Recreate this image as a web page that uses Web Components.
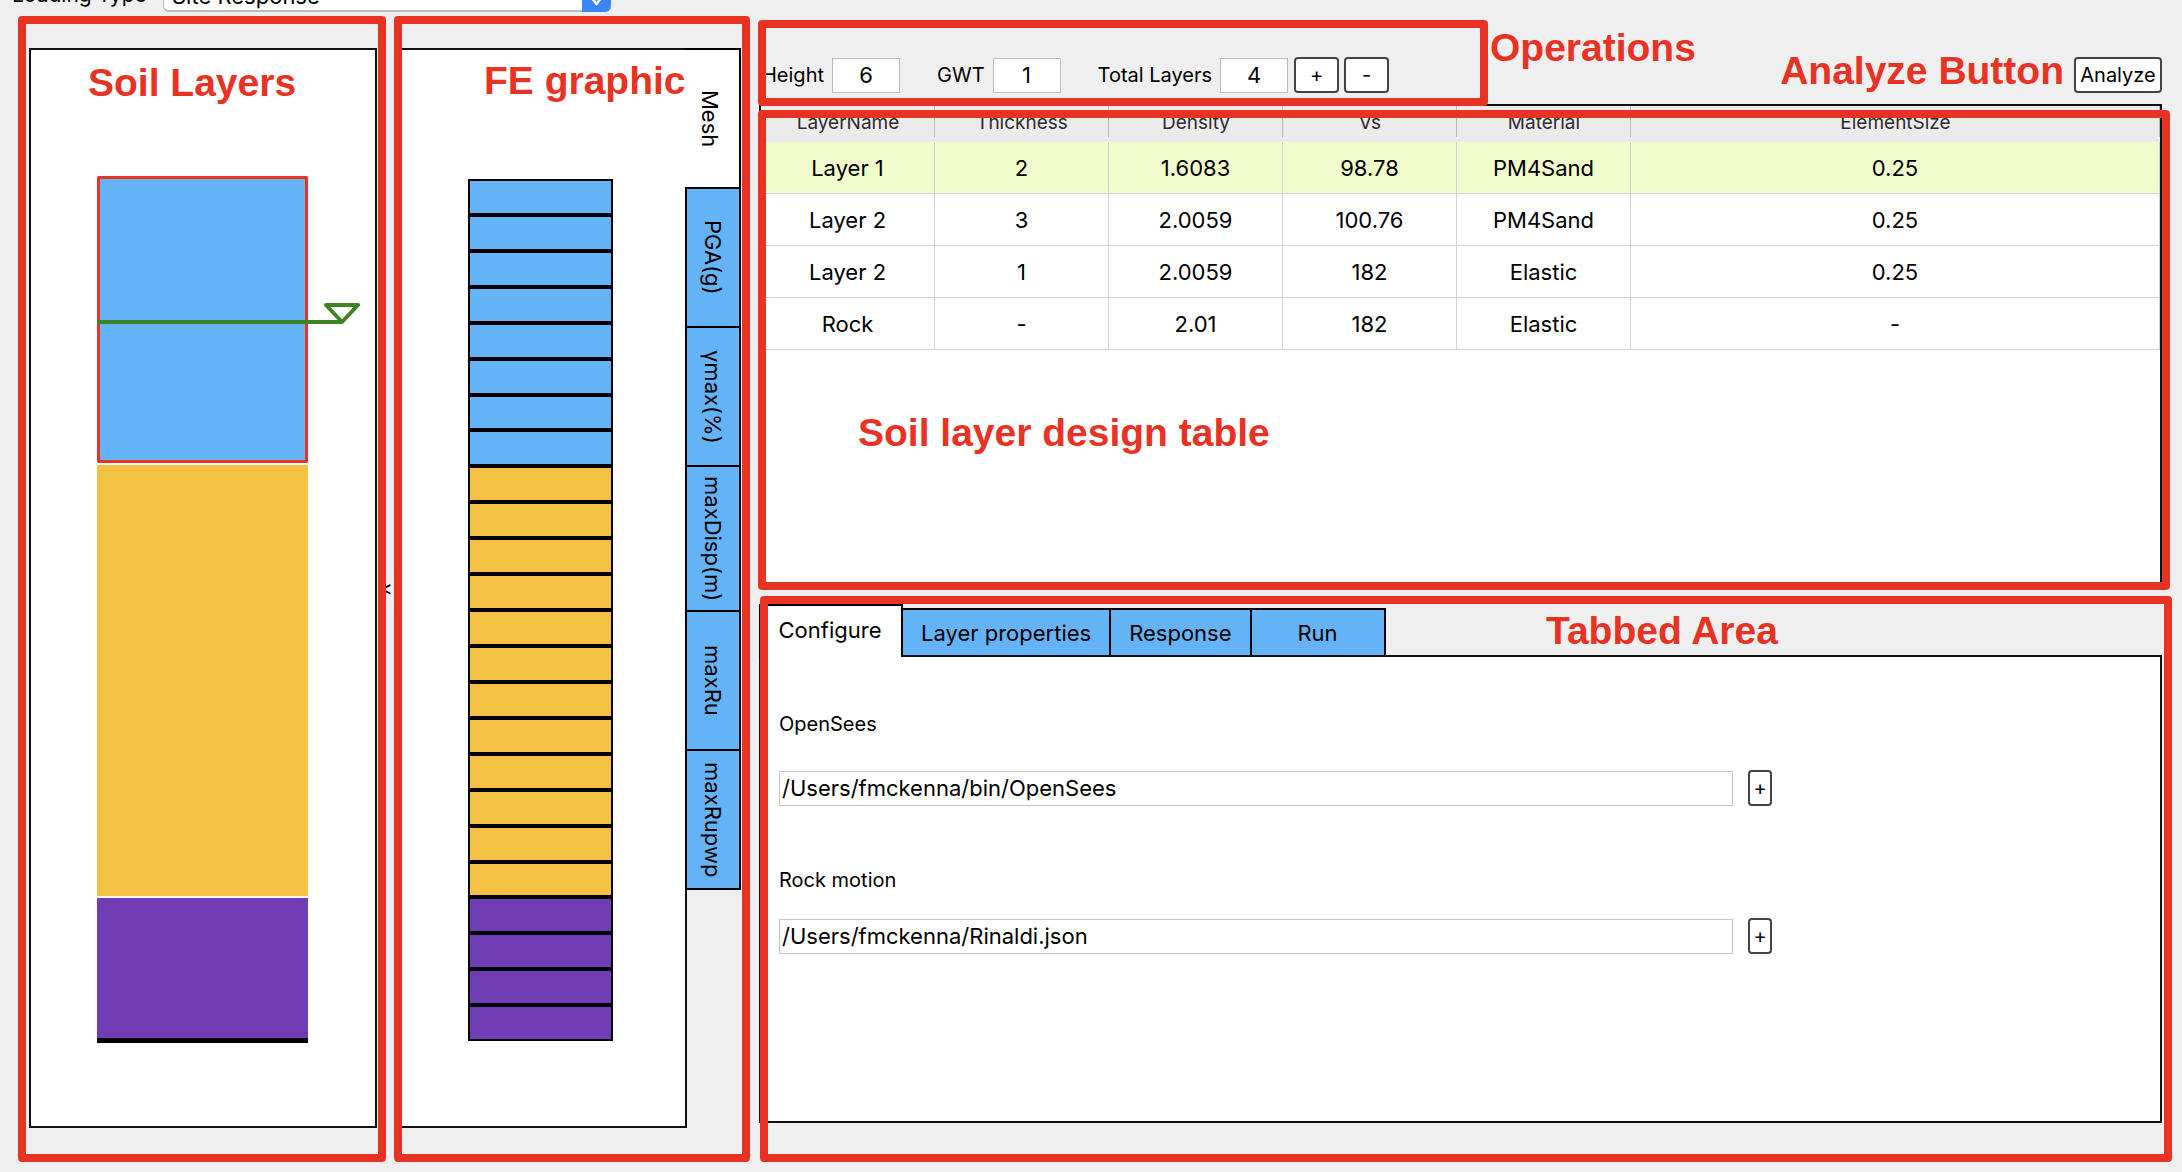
<!DOCTYPE html>
<html lang="en">
<head>
<meta charset="utf-8">
<title>Site Response</title>
<style>
  html, body { margin: 0; }
  body {
    --red: #e83223;
    --blue: #64b3f6;
    --sand: #f3c242;
    --rock: #703db4;
    --small: 20px;
    --large: 22px;
    background: #efefef;
    color: #000;
    font-family: Inter, "Liberation Sans", sans-serif;
    font-size: 20px;
    overflow: hidden;
  }
</style>
</head>
<body>
<site-workbench></site-workbench>

<script>
const define = (name, html, setup) => {
  const template = document.createElement('template');
  template.innerHTML = html;
  customElements.define(name, class extends HTMLElement {
    constructor() {
      super();
      this.attachShadow({ mode: 'open' }).append(template.content.cloneNode(true));
    }
    connectedCallback() {
      if (setup && !this.ready) { this.ready = true; setup(this, this.shadowRoot); }
    }
  });
};

/* Red outline laid over a region of the tool */
define('region-frame', `
  <style>
    :host { display: block; position: absolute; z-index: 5; box-sizing: border-box;
      border: 8px solid var(--red); border-radius: 4px; pointer-events: none; }
  </style>`);

/* Red caption naming a region */
define('region-caption', `
  <style>
    :host { display: block; position: absolute; z-index: 6; color: var(--red); white-space: nowrap;
      font: bold 39px/40px "Liberation Sans", Arial, sans-serif; pointer-events: none; }
  </style><slot></slot>`);

/* Push button */
define('tool-button', `
  <style>
    :host { display: block; height: 36px; }
    button { box-sizing: border-box; width: 100%; height: 100%; padding: 0; border: 2px solid #444;
      border-radius: 4px; background: #fff; color: #000; font: inherit; font-size: var(--small); line-height: 24px; }
  </style><button type="button"><slot></slot></button>`);

/* Caption with a short centred number box */
define('number-field', `
  <style>
    :host { display: block; }
    label { display: flex; align-items: center; gap: 8px; font-size: var(--small); line-height: 24px; white-space: nowrap; }
    input { box-sizing: border-box; width: 68px; height: 35px; padding: 0; border: 1px solid #bdbdbd; background: #fff;
      color: #000; font: inherit; font-size: var(--large); text-align: center; border-radius: 0; }
  </style>
  <label><span></span><input type="text"></label>`,
  (host, root) => {
    root.querySelector('span').textContent = host.getAttribute('label');
    root.querySelector('input').value = host.getAttribute('value');
  });

define('loading-type', `
  <style>
    :host { display: flex; align-items: center; margin-top: -26px; height: 38px; padding-left: 12px; }
    label { width: 151px; font-size: 21px; line-height: 24px; padding-top: 3px; box-sizing: border-box; }
    .box { position: relative; width: 448px; height: 38px; }
    select { appearance: none; box-sizing: border-box; width: 100%; height: 100%; padding: 6px 38px 0 8px;
      border: 1px solid #bbb; border-bottom-width: 2px; border-radius: 6px; background: #fff; color: #000;
      font: inherit; font-size: var(--large); }
    svg { position: absolute; right: 0; top: 0; }
  </style>
  <label for="type">Loading Type</label>
  <div class="box">
    <select id="type"><option>Site Response</option></select>
    <svg width="29" height="38" viewBox="0 0 29 38" aria-hidden="true">
      <path d="M0 0H23a6 6 0 0 1 6 6V32a6 6 0 0 1-6 6H0z" fill="#3b87f8"/>
      <path d="M10 24l4.500 6L19 24" fill="none" stroke="#fff" stroke-width="2.500" stroke-linecap="round" stroke-linejoin="round"/>
    </svg>
  </div>`);

define('soil-column', `
  <style>
    :host { display: flex; position: relative; box-sizing: border-box; border: 2px solid #111; background: #fff;
      padding: 126px 67px 83px 66px; }
    .column { position: relative; flex: 1; display: flex; flex-direction: column; }
    .layers { flex: 1; display: flex; flex-direction: column; gap: 2px; }
    .l1 { flex: 2; background: var(--blue); box-shadow: inset 0 0 0 3px var(--red); border-radius: 2px; }
    .l2 { flex: 3; background: var(--sand); }
    .l3 { flex: 1; background: var(--rock); }
    .base { height: 5px; margin-top: -3px; background: #000; z-index: 1; }
    svg { position: absolute; left: 0; top: calc(100% / 6 - 18px); }
    region-frame { inset: -34px -11px -36px -13px; }
    region-caption { left: 57px; top: 13px; }
  </style>
  <div class="column">
    <div class="layers"><div class="l1"></div><div class="l2"></div><div class="l3"></div></div>
    <div class="base"></div>
    <svg width="266" height="24" viewBox="0 0 266 24" aria-hidden="true">
      <path d="M0 20H245L261 3H229L245 20" fill="none" stroke="#3f8424" stroke-width="4" stroke-linejoin="round"/>
    </svg>
  </div>
  <region-frame></region-frame>
  <region-caption>Soil Layers</region-caption>`);

define('split-handle', `
  <style>
    :host { display: flex; align-items: center; justify-content: center; }
    button { border: 0; padding: 0; background: none; color: #000; font: inherit; font-size: 20px; line-height: 20px; }
  </style><button type="button" aria-label="Collapse">&lt;</button>`);

define('mesh-view', `
  <style>
    :host { display: flex; position: relative; }
    .canvas { flex: 1; display: flex; box-sizing: border-box; border: 2px solid #111; background: #fff; padding: 129px 72px 85px 71px; }
    .mesh { flex: 1; display: flex; flex-direction: column; box-sizing: border-box; border: 2px solid #000; background: #000; gap: 4px; }
    .mesh i { flex: 1; background: var(--c); }
    .tabs { display: flex; flex-direction: column; width: 56px; margin-left: -2px; }
    button { writing-mode: vertical-rl; box-sizing: border-box; min-height: 141px; margin: 0 0 -2px; padding: 9px 0;
      border: 2px solid #000; background: var(--blue); color: #000; font: inherit; font-size: var(--large);
      line-height: 24px; text-align: center; }
    button[aria-selected=true] { min-height: 139px; margin: 0; background: #fff; border-width: 2px 2px 0 0; padding-right: 4px; z-index: 1; }
    region-frame { inset: -32px -9px -34px -1px; }
    region-caption { left: 89px; top: 13px; }
  </style>
  <div class="canvas"><div class="mesh"></div></div>
  <div class="tabs" role="tablist">
    <button role="tab" aria-selected="true">Mesh</button>
    <button role="tab">PGA(g)</button>
    <button role="tab">γmax(%)</button>
    <button role="tab">maxDisp(m)</button>
    <button role="tab">maxRu</button>
    <button role="tab">maxRupwp</button>
  </div>
  <region-frame></region-frame>
  <region-caption>FE graphic</region-caption>`,
  (host, root) => {
    const mesh = root.querySelector('.mesh');
    for (const [count, colour] of [[8, '--blue'], [12, '--sand'], [4, '--rock']])
      for (let n = 0; n < count; n++) {
        const cell = document.createElement('i');
        cell.style.setProperty('--c', `var(${colour})`);
        mesh.append(cell);
      }
  });

define('operations-bar', `
  <style>
    :host { display: flex; position: relative; align-items: center; height: 36px; }
    .fields { display: flex; gap: 37px; padding-left: 3px; }
    .steps { display: flex; gap: 5px; margin-left: 6px; }
    .steps tool-button { width: 45px; }
    .run { width: 88px; margin-left: auto; }
    region-frame { left: -1px; top: -37px; bottom: -13px; width: 730px; }
    .ops { left: 731px; top: -29px; }
    .analyze { right: 98px; top: -6px; }
  </style>
  <div class="fields">
    <number-field label="Height" value="6"></number-field>
    <number-field label="GWT" value="1"></number-field>
    <number-field label="Total Layers" value="4"></number-field>
  </div>
  <div class="steps"><tool-button>+</tool-button><tool-button>-</tool-button></div>
  <tool-button class="run">Analyze</tool-button>
  <region-frame></region-frame>
  <region-caption class="ops">Operations</region-caption>
  <region-caption class="analyze">Analyze Button</region-caption>`);

define('layer-table', `
  <style>
    :host { display: block; position: relative; box-sizing: border-box; border: 2px solid #111; background: #fff; }
    table { width: 100%; table-layout: fixed; border-spacing: 0; }
    col { width: 174px; }
    col:last-child { width: auto; }
    th, td { box-sizing: border-box; padding: 0; text-align: center; font-weight: normal; }
    th { height: 36px; padding-bottom: 2px; color: #2b2b2b; font-size: 19px; line-height: 24px;
      background: linear-gradient(#bbb, #bbb) right top / 1px 31px no-repeat #ebebeb; }
    td { height: 52px; font-size: var(--large); line-height: 28px; border: solid #d2d2d2; border-width: 0 1px 1px 0; }
    tbody tr:first-child { background: #f1fdca; }
    region-frame { inset: 4px -10px -4px -3px; }
    region-caption { left: 97px; top: 307px; }
  </style>
  <table>
    <colgroup><col><col><col><col><col><col></colgroup>
    <thead><tr></tr></thead>
    <tbody></tbody>
  </table>
  <region-frame></region-frame>
  <region-caption>Soil layer design table</region-caption>`,
  (host, root) => {
    const add = (row, tag, texts) => texts.forEach(text => {
      const cell = document.createElement(tag);
      cell.textContent = text;
      row.append(cell);
    });
    add(root.querySelector('thead tr'), 'th', ['LayerName', 'Thickness', 'Density', 'Vs', 'Material', 'ElementSize']);
    [['Layer 1', '2', '1.6083', '98.78', 'PM4Sand', '0.25'],
     ['Layer 2', '3', '2.0059', '100.76', 'PM4Sand', '0.25'],
     ['Layer 2', '1', '2.0059', '182', 'Elastic', '0.25'],
     ['Rock', '-', '2.01', '182', 'Elastic', '-']].forEach(texts => {
      const row = document.createElement('tr');
      add(row, 'td', texts);
      root.querySelector('tbody').append(row);
    });
  });

/* File path with a browse button */
define('path-field', `
  <style>
    :host { display: block; }
    label { display: block; font-size: var(--small); line-height: 24px; }
    .row { display: grid; grid-template-columns: minmax(0, 954px) 24px; gap: 15px; align-items: center; margin-top: var(--label-gap, 34px); }
    input { box-sizing: border-box; width: 100%; height: 35px; padding: 0 2px; border: 1px solid #c6c6c6; border-radius: 0;
      background: #fff; color: #000; font: inherit; font-size: var(--large); }
  </style>
  <label for="path"></label>
  <div class="row"><input id="path" type="text"><tool-button>+</tool-button></div>`,
  (host, root) => {
    root.querySelector('label').textContent = host.getAttribute('label');
    root.querySelector('input').value = host.getAttribute('value');
  });

define('config-tabs', `
  <style>
    :host { display: flex; flex-direction: column; position: relative; }
    .tabs { display: flex; align-items: flex-end; height: 53px; }
    button { box-sizing: border-box; height: 49px; margin: 0 0 0 -2px; padding: 0 18px; min-width: 136px; border: 2px solid #000;
      background: var(--blue); color: #000; font: inherit; font-size: var(--large); line-height: 28px; white-space: nowrap; }
    button[aria-selected=true] { height: 53px; min-width: 144px; margin: 0; padding: 0 2px 4px 0; background: #fff; border-bottom: 0; z-index: 1; }
    .panel { flex: 1; box-sizing: border-box; margin-top: -2px; border: 2px solid #111; background: #fff; padding: 55px 18px 0; }
    .panel path-field + path-field { margin-top: 62px; --label-gap: 26px; }
    region-frame { inset: -8px -10px -39px 1px; }
    region-caption { left: 787px; top: 7px; }
  </style>
  <div class="tabs" role="tablist">
    <button role="tab" aria-selected="true">Configure</button>
    <button role="tab">Layer properties</button>
    <button role="tab">Response</button>
    <button role="tab">Run</button>
  </div>
  <div class="panel" role="tabpanel">
    <path-field label="OpenSees" value="/Users/fmckenna/bin/OpenSees"></path-field>
    <path-field label="Rock motion" value="/Users/fmckenna/Rinaldi.json"></path-field>
  </div>
  <region-frame></region-frame>
  <region-caption>Tabbed Area</region-caption>`);

define('site-workbench', `
  <style>
    :host { display: flex; flex-direction: column; height: 100vh; }
    main { flex: 1; min-height: 0; display: grid; box-sizing: border-box; padding: 36px 20px 44px 29px;
      grid-template-columns: 348px 18px 346px minmax(0, 1fr); }
    .design { display: flex; flex-direction: column; min-width: 0; padding: 9px 0 5px; margin-left: 18px; }
    layer-table { flex: 480 0 0; margin: 11px 0 16px; }
    config-tabs { flex: 519 0 0; }
  </style>
  <loading-type></loading-type>
  <main>
    <soil-column></soil-column>
    <split-handle></split-handle>
    <mesh-view></mesh-view>
    <div class="design">
      <operations-bar></operations-bar>
      <layer-table></layer-table>
      <config-tabs></config-tabs>
    </div>
  </main>`);
</script>
</body>
</html>
